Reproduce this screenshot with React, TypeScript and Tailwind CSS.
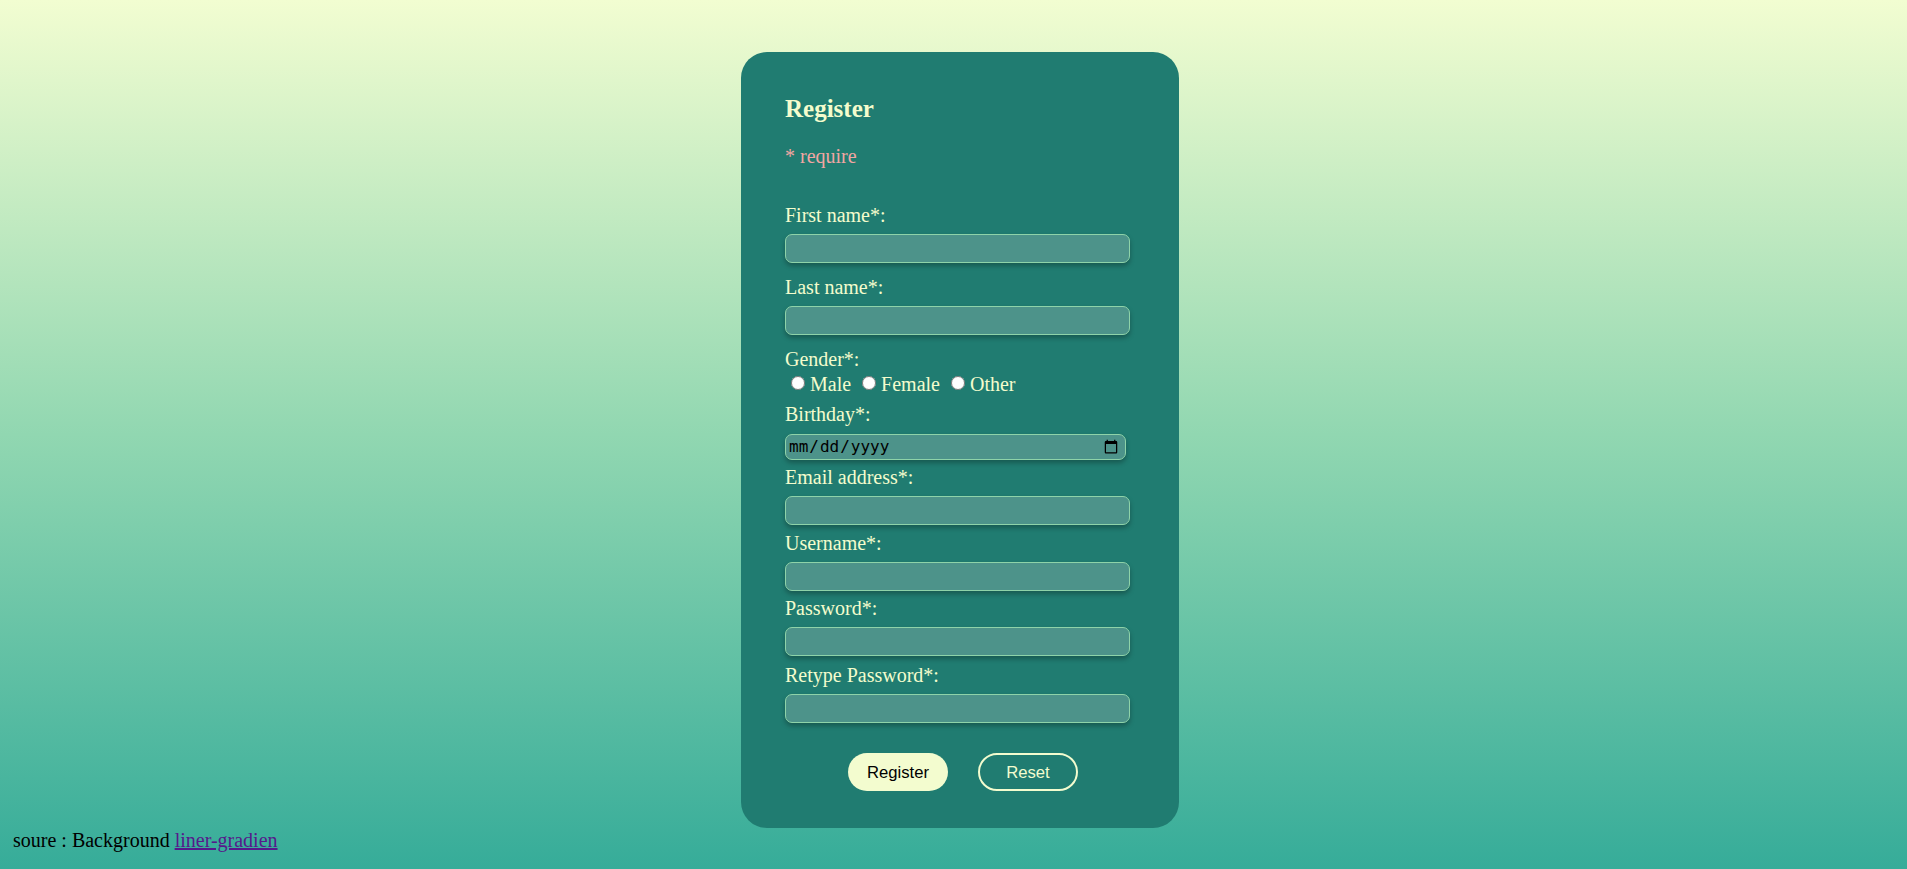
import React from "react";

const labelCls = "block text-[20px] leading-[23px] text-[#f4fccd]";
const inputCls =
  "mt-[7px] block w-[345px] h-[29px] rounded-[7px] border border-[#8ed3a9] bg-[#4d938a] shadow-[0_3px_5px_rgba(0,0,0,0.28)] outline-none";

function Field({ label, type = "text" }: { label: string; type?: string }) {
  return (
    <div>
      <label className={labelCls}>{label}</label>
      <input type={type} className={inputCls} />
    </div>
  );
}

export default function App() {
  return (
    <div
      className="min-h-screen w-full bg-[linear-gradient(180deg,#f2fdd1_0%,#91d7b1_50%,#36ac99_100%)]"
      style={{ fontFamily: '"Liberation Serif", "Times New Roman", serif' }}
    >
      <div className="flex justify-center pl-[13px] pt-[52px]">
        <div className="w-[438px] rounded-[26px] bg-[#207c71] pl-[44px] pr-[49px] pt-[42px] pb-[37px]">
          <h2 className="text-[25px] leading-[29px] font-bold text-[#f4fccd]">Register</h2>
          <p className="mt-[22px] text-[20px] leading-[23px] text-[#f2a6a3]">* require</p>

          <div className="mt-[36px]">
            <Field label="First name*:" />
          </div>
          <div className="mt-[13px]">
            <Field label="Last name*:" />
          </div>
          <div className="mt-[13px]">
            <label className={labelCls}>Gender*:</label>
            <div className="mt-[2px] flex items-center h-[23px] text-[20px] leading-[23px] text-[#f4fccd]">
              <input type="radio" name="g" className="ml-[6px] mr-[5px] w-[14px] h-[14px] mb-[3px]" />
              <span className="mr-[5px]">Male</span>
              <input type="radio" name="g" className="ml-[6px] mr-[5px] w-[14px] h-[14px] mb-[3px]" />
              <span className="mr-[5px]">Female</span>
              <input type="radio" name="g" className="ml-[6px] mr-[5px] w-[14px] h-[14px] mb-[3px]" />
              <span>Other</span>
            </div>
          </div>
          <div className="mt-[7px]">
            <label className={labelCls}>Birthday*:</label>
            <input
              type="date"
              className="mt-[8px] block w-[341px] h-[26px] rounded-[7px] border border-[#8ed3a9] bg-[#4d938a] shadow-[0_3px_5px_rgba(0,0,0,0.28)] outline-none pl-[2px] pr-[4px] text-[16px] text-black"
              style={{ fontFamily: '"DejaVu Sans Mono", monospace' }}
            />
          </div>
          <div className="mt-[6px]">
            <Field label="Email address*:" />
          </div>
          <div className="mt-[7px]">
            <Field label="Username*:" />
          </div>
          <div className="mt-[6px]">
            <Field label="Password*:" type="password" />
          </div>
          <div className="mt-[8px]">
            <Field label="Retype Password*:" type="password" />
          </div>

          <div
            className="mt-[30px] flex justify-center gap-[30px] ml-[-44px] mr-[-49px] pl-[6px]"
            style={{ fontFamily: '"Liberation Sans", Arial, sans-serif' }}
          >
            <button className="w-[100px] h-[38px] rounded-full bg-[#f3fccf] text-[16.67px] text-black">
              Register
            </button>
            <button className="w-[100px] h-[38px] rounded-full border-2 border-[#f3fccf] text-[16.67px] text-[#f3fccf]">
              Reset
            </button>
          </div>
        </div>
      </div>
      <p className="mt-[1px] pl-[13px] text-[20px] leading-[23px] text-black">
        soure : Background{" "}
        <a href="#" className="text-[#551a8b] underline">
          liner-gradien
        </a>
      </p>
    </div>
  );
}
